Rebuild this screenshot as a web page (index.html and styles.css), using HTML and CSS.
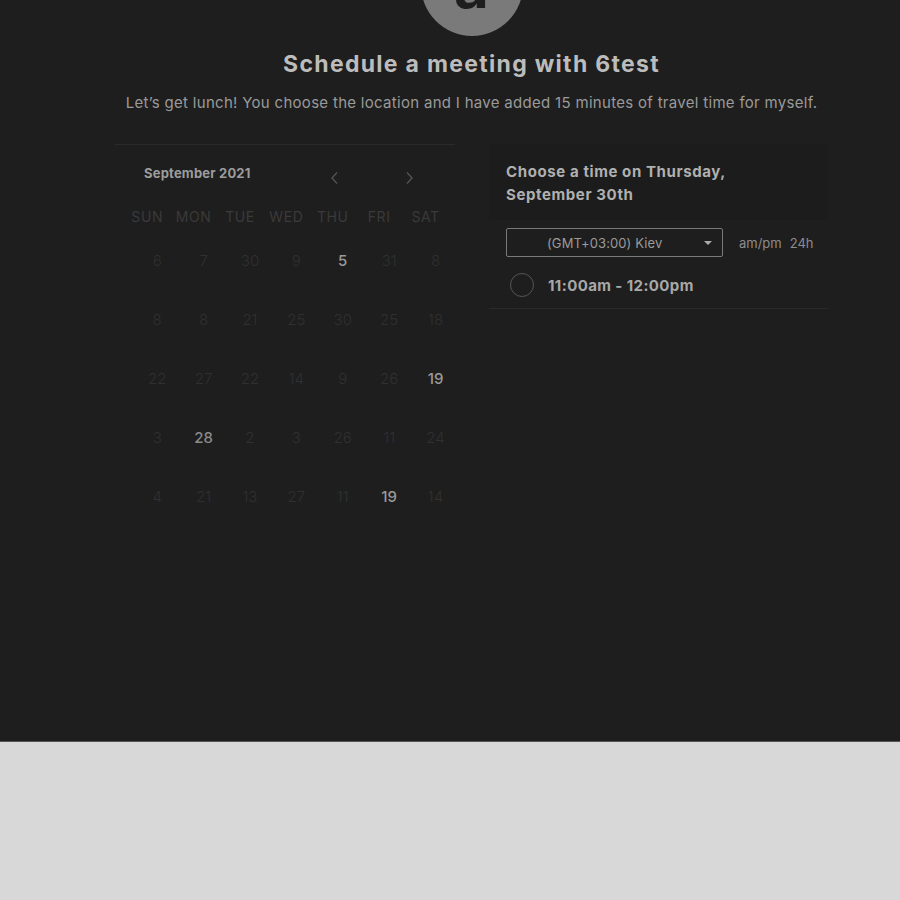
FILE: index.html
```html
<!DOCTYPE html>
<html>
<head>
<meta charset="utf-8">
<link rel="stylesheet" href="styles.css">
</head>
<body>
<div class="page">
  <div class="avatar"><span>a</span></div>
  <h1 class="title">Schedule a meeting with 6test</h1>
  <p class="desc">Let’s get lunch! You choose the location and I have added 15 minutes of travel time for myself.</p>
  <div class="cols">
    <div class="cal">
      <div class="cal-head">
        <span class="month">September 2021</span>
        <span class="nav prev"><svg width="10" height="14" viewBox="0 0 10 14"><path d="M7 1.5L2 7l5 5.5" fill="none" stroke="#555" stroke-width="1.3"/></svg></span>
        <span class="nav next"><svg width="10" height="14" viewBox="0 0 10 14"><path d="M3 1.5L8 7l-5 5.5" fill="none" stroke="#555" stroke-width="1.3"/></svg></span>
      </div>
      <div class="grid">
        <div class="wd">SUN</div><div class="wd">MON</div><div class="wd">TUE</div><div class="wd">WED</div><div class="wd">THU</div><div class="wd">FRI</div><div class="wd">SAT</div>
        <div class="d">6</div><div class="d">7</div><div class="d">30</div><div class="d">9</div><div class="d on">5</div><div class="d">31</div><div class="d">8</div>
        <div class="d">8</div><div class="d">8</div><div class="d">21</div><div class="d">25</div><div class="d">30</div><div class="d">25</div><div class="d">18</div>
        <div class="d">22</div><div class="d">27</div><div class="d">22</div><div class="d">14</div><div class="d">9</div><div class="d">26</div><div class="d on">19</div>
        <div class="d">3</div><div class="d on mid">28</div><div class="d">2</div><div class="d">3</div><div class="d">26</div><div class="d">11</div><div class="d">24</div>
        <div class="d">4</div><div class="d">21</div><div class="d">13</div><div class="d">27</div><div class="d">11</div><div class="d on">19</div><div class="d">14</div>
      </div>
    </div>
    <div class="times">
      <div class="times-head">Choose a time on Thursday,<br>September 30th</div>
      <div class="tz-row">
        <div class="select"><span>(GMT+03:00) Kiev</span><svg class="caret" width="8" height="4" viewBox="0 0 8 4"><path d="M0 0h8L4 4z" fill="#aaa"/></svg></div>
        <div class="fmt"><span>am/pm</span><span>24h</span></div>
      </div>
      <div class="slot"><span class="radio"></span><span class="slot-t">11:00am - 12:00pm</span></div>
    </div>
  </div>
</div>
</body>
</html>
```
FILE: styles.css
```css
html, body { margin: 0; padding: 0; }
body {
  background: #d8d8d8;
  font-family: Inter, "Liberation Sans", sans-serif;
  overflow: hidden;
}
.page {
  background: #1e1e1e;
  height: 741px;
  border-bottom: 1px solid #555;
  display: flex;
  flex-direction: column;
  align-items: center;
  padding-left: 43px;
  box-sizing: content-box;
}
.avatar {
  width: 102px;
  height: 102px;
  margin-top: -66px;
  border-radius: 50%;
  background: #7a7a7a;
  display: flex;
  justify-content: center;
  align-items: flex-end;
  flex-shrink: 0;
}
.avatar span {
  font-size: 60px;
  font-weight: 700;
  color: #1e1e1e;
  line-height: 1;
  margin-bottom: 20px;
}
.title {
  margin: 13px 0 0;
  font-size: 23px;
  font-weight: 700;
  letter-spacing: 1.3px;
  color: #bcbcbc;
  line-height: 30px;
}
.desc {
  margin: 14px 0 0;
  font-size: 15px;
  letter-spacing: 0.3px;
  color: #9a9a9a;
  line-height: 20px;
}
.cols {
  margin-top: 31px;
  width: 713px;
  display: flex;
  gap: 34px;
  align-items: flex-start;
}
.cal {
  width: 340px;
  border-top: 1px solid #2a2a2a;
}
.cal-head {
  display: flex;
  align-items: center;
  height: 60px;
  padding-left: 29px;
}
.month {
  font-size: 13px;
  font-weight: 700;
  letter-spacing: 0.2px;
  color: #9c9c9c;
  margin-top: -4px;
}
.nav { display: flex; }
.prev { margin-left: 79px; margin-top: 6px; }
.next { margin-left: 64px; margin-top: 6px; }
.grid {
  display: grid;
  grid-template-columns: repeat(7, 46.4px);
  padding-left: 9px;
}
.wd {
  text-align: center;
  font-size: 14px;
  color: #3a3a3a;
  letter-spacing: 0.6px;
  height: 24px;
  line-height: 24px;
  margin-bottom: 22px;
}
.d {
  text-align: center;
  font-size: 15px;
  font-weight: 300;
  color: #303030;
  height: 59px;
  line-height: 20px;
  padding-left: 20px;
}
.d.on { color: #9a9a9a; font-weight: 500; }
.d.mid { color: #8a8a8a; }
.times {
  width: 339px;
  border-bottom: 1px solid #2a2a2a;
  padding-bottom: 8px;
}
.times-head {
  background: #1c1c1c;
  font-size: 15px;
  font-weight: 700;
  letter-spacing: 0.6px;
  color: #b0b0b0;
  line-height: 23px;
  padding: 16px 17px 14px;
}
.tz-row {
  display: flex;
  align-items: center;
  margin-top: 8px;
  padding-left: 17px;
}
.select {
  width: 215px;
  height: 27px;
  border: 1px solid #7a7a7a;
  border-radius: 2px;
  display: flex;
  align-items: center;
  position: relative;
  font-size: 13px;
  color: #9a9a9a;
}
.select span { margin-left: 40px; letter-spacing: 0.1px; }
.caret { position: absolute; right: 10px; top: 12px; }
.fmt {
  display: flex;
  gap: 8px;
  margin-left: 16px;
  font-size: 13px;
  color: #8c8c8c;
}
.slot {
  display: flex;
  align-items: center;
  padding-left: 21px;
  margin-top: 13px;
  height: 30px;
}
.radio {
  width: 22px;
  height: 22px;
  border: 1px solid #555;
  border-radius: 50%;
}
.slot-t {
  margin-left: 14px;
  font-size: 15px;
  font-weight: 700;
  letter-spacing: 0.4px;
  color: #a8a8a8;
}
```
